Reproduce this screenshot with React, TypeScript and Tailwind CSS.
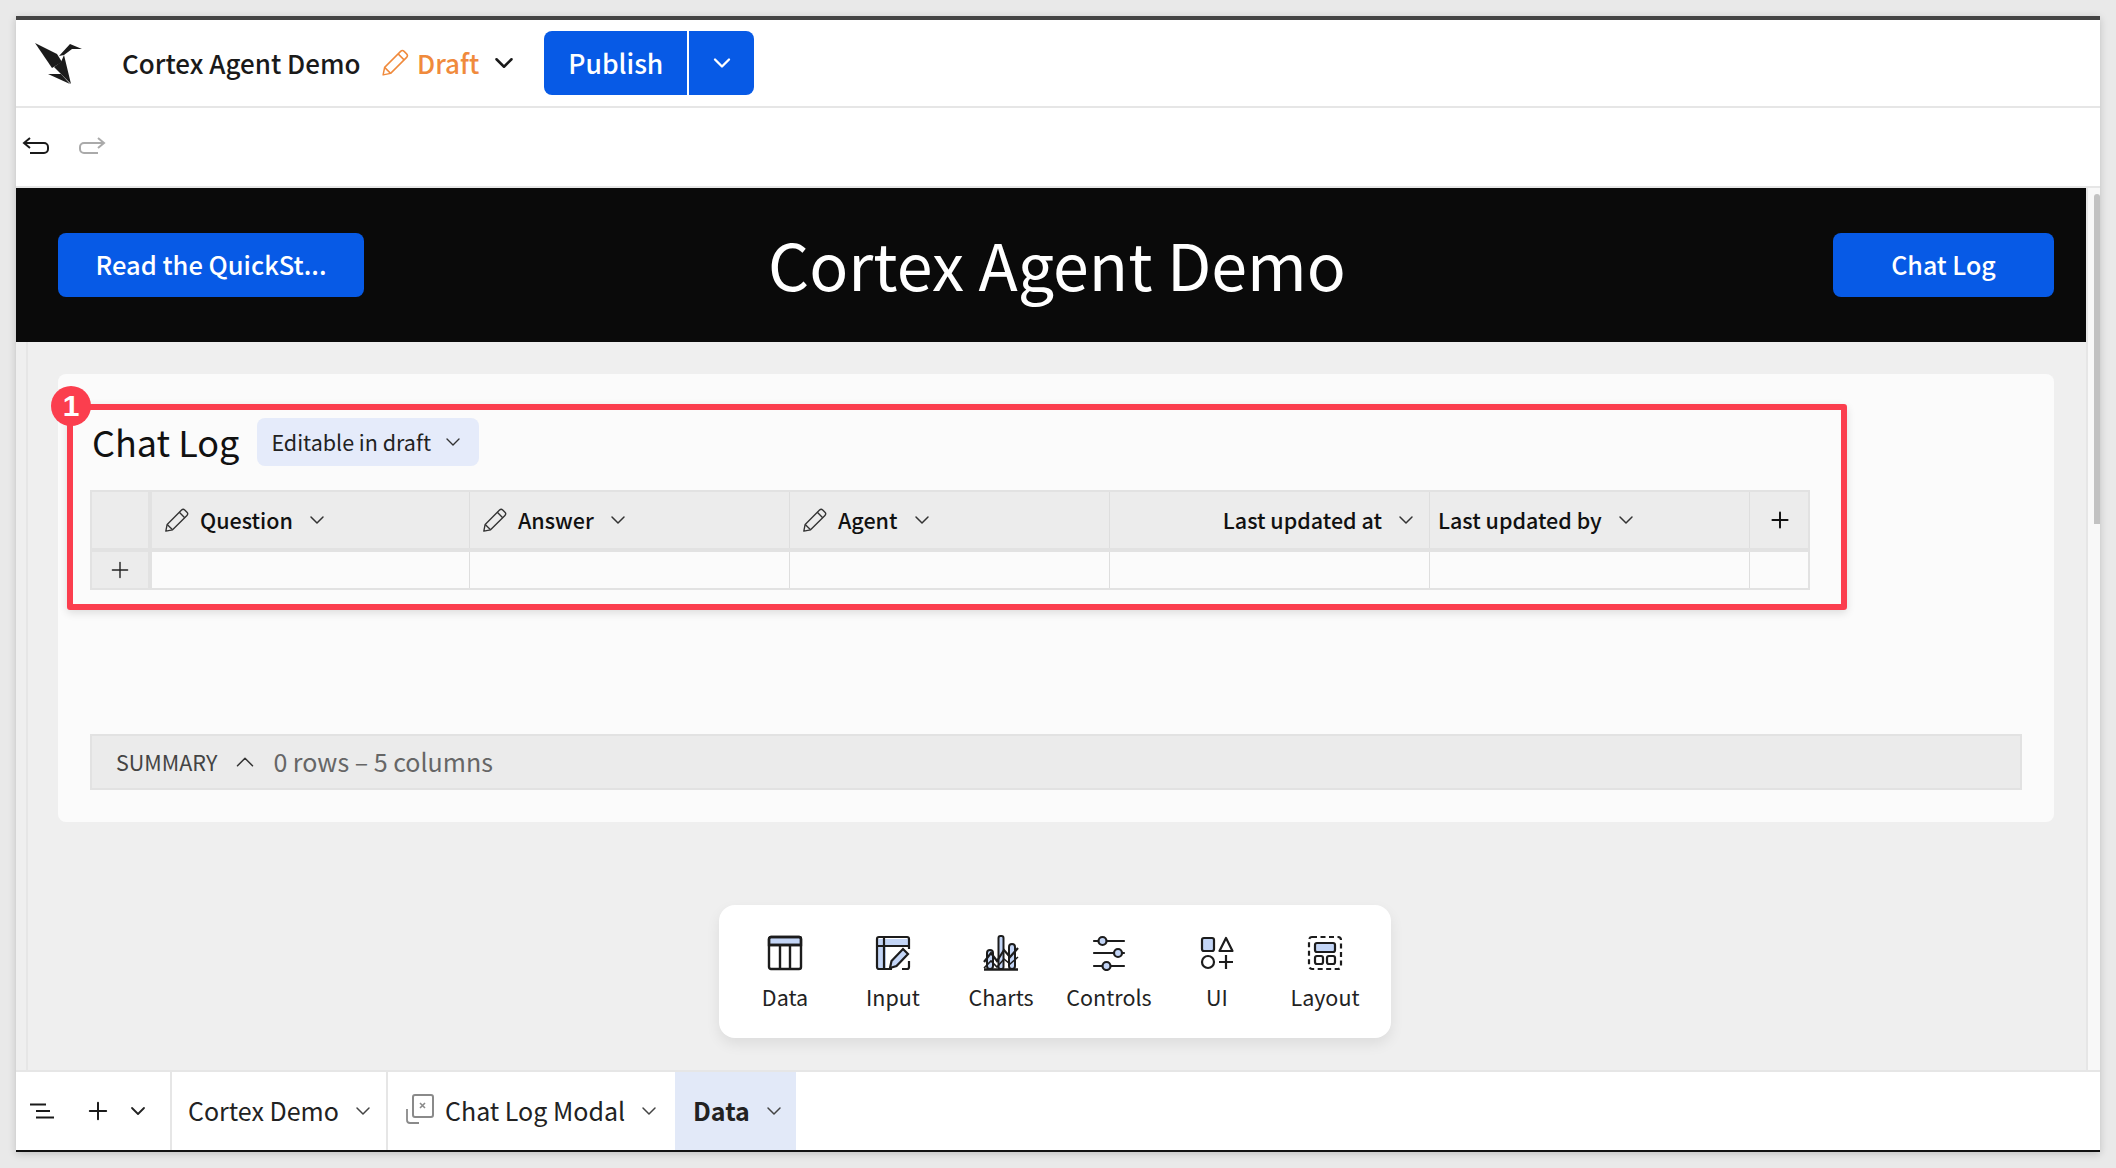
import React from 'react';
import { ChevronDown, ChevronUp, Plus } from 'lucide-react';

const Pencil: React.FC<{ className?: string }> = ({ className }) => (
  <svg viewBox="0 0 24 24" fill="none" stroke="currentColor" strokeWidth="1.2" strokeLinejoin="round" className={className}>
    <path d="M2.500 21.500l1.200-6L16.500 2.700a2 2 0 0 1 2.800 0l2 2a2 2 0 0 1 0 2.800L8.500 20.300z" />
    <path d="M14.500 4.700l4.800 4.800" />
    <path d="M3.700 15.500l4.800 4.800" />
  </svg>
);

const Logo = () => (
  <svg viewBox="0 0 47 41" className="w-[47px] h-[41px]" fill="#1b1b1b">
    <polygon points="0,0 22,11 27,19 17,25" />
    <polygon points="24,13 35,1 47,6 37,6 29,12" />
    <polygon points="26,19 29,12 36,41 19,24" />
    <polygon points="13,31 26,31 35,41" />
  </svg>
);

const DataIcon = () => (
  <svg viewBox="0 0 36 36" className="w-9 h-9" fill="none" stroke="#1c1c1c" strokeWidth="2.4">
    <path d="M2 10V4a2 2 0 0 1 2-2h28a2 2 0 0 1 2 2v6z" fill="#c3d5f6" />
    <rect x="2" y="2" width="32" height="32" rx="2" />
    <path d="M2 10h32M13 10v24M23 10v24" />
  </svg>
);

const InputIcon = () => (
  <svg viewBox="0 0 36 36" className="w-9 h-9" fill="none" stroke="#1c1c1c" strokeWidth="2.2">
    <path d="M2 4h32v7H11v23H4a2 2 0 0 1-2-2z" fill="#c3d5f6" stroke="none" />
    <path d="M17 34H4a2 2 0 0 1-2-2V4a2 2 0 0 1 2-2h28a2 2 0 0 1 2 2v10" />
    <path d="M2 11h32M9 2v32" />
    <path d="M15 33l1.500-7L28 14l5 5-11.500 12z" fill="#c3d5f6" />
    <path d="M34 26v6a2 2 0 0 1-2 2h-5" />
  </svg>
);

const ChartsIcon = () => (
  <svg viewBox="0 0 36 36" className="w-9 h-9" fill="none" stroke="#1c1c1c" strokeWidth="2">
    <path d="M1 34.500h34" strokeWidth="2.400" />
    <rect x="15.500" y="1" width="5" height="33" rx="2" fill="#c3d5f6" />
    <rect x="26" y="9" width="6" height="25" rx="3" fill="#c3d5f6" />
    <rect x="4" y="15" width="6" height="19" rx="3" fill="#c3d5f6" />
    <path d="M1 27l7-9 6 8 7-11 6 7 8-9" strokeWidth="2.200" />
    <path d="M1 33l7-7 6 6 7-8 6 5 8-7" strokeWidth="1.600" />
  </svg>
);

const ControlsIcon = () => (
  <svg viewBox="0 0 36 36" className="w-9 h-9" fill="none" stroke="#1c1c1c" strokeWidth="2.200" strokeLinecap="round">
    <path d="M3 6h4M16 6h17M3 18h19M32 18h1M3 31h8M20 31h13" />
    <circle cx="11.500" cy="6" r="4" fill="#c3d5f6" />
    <circle cx="27" cy="18" r="4" fill="#c3d5f6" />
    <circle cx="15.500" cy="31" r="4" fill="#c3d5f6" />
  </svg>
);

const UiIcon = () => (
  <svg viewBox="0 0 36 36" className="w-9 h-9" fill="none" stroke="#1c1c1c" strokeWidth="2.200">
    <rect x="3" y="3" width="12" height="13" rx="2" fill="#c3d5f6" />
    <path d="M27 3l6.500 13h-13z" strokeLinejoin="round" />
    <circle cx="9" cy="27" r="6" />
    <path d="M27 20v14M20 27h14" />
  </svg>
);

const LayoutIcon = () => (
  <svg viewBox="0 0 36 36" className="w-9 h-9" fill="none" stroke="#1c1c1c" strokeWidth="2.200">
    <rect x="2" y="2" width="32" height="32" rx="3" strokeDasharray="5 3.500" />
    <rect x="8" y="8" width="20" height="9" rx="2" fill="#c3d5f6" />
    <rect x="8" y="21" width="8" height="8" rx="2" />
    <rect x="20" y="21" width="8" height="8" rx="2" />
  </svg>
);

const tools = [
  { label: 'Data', icon: <DataIcon /> },
  { label: 'Input', icon: <InputIcon /> },
  { label: 'Charts', icon: <ChartsIcon /> },
  { label: 'Controls', icon: <ControlsIcon /> },
  { label: 'UI', icon: <UiIcon /> },
  { label: 'Layout', icon: <LayoutIcon /> },
];

const HeaderCell: React.FC<{ name: string; edit?: boolean; right?: boolean }> = ({ name, edit, right }) => (
  <div className={`flex items-center border-r border-[#dedede] bg-[#ececec] ${right ? 'justify-end pr-[11px]' : edit ? 'pl-[11px]' : 'pl-[8px]'}`}>
    {edit && <Pencil className="w-[27px] h-[27px] mr-[10px] text-[#333]" />}
    <span className="text-[21.5px] leading-[30px] font-medium text-[#111]">{name}</span>
    <ChevronDown className="w-[24px] h-[24px] ml-[12px] text-[#333]" strokeWidth={1.5} />
  </div>
);

const App: React.FC = () => {
  return (
    <div className="w-full h-[1168px] bg-[#e9e9e9] pt-4 pl-4 pr-4 overflow-hidden font-['Noto_Sans_CJK_JP','Noto_Sans',sans-serif]">
      <div className="w-[2084px] h-[1136px] flex flex-col bg-white border-t-4 border-[#444] border-b-2 border-b-[#111] shadow-[0_2px_8px_rgba(0,0,0,0.18)]">
        {/* top bar */}
        <div className="h-[88px] shrink-0 flex items-center border-b-2 border-[#e6e6e6] pl-[19px]">
          <Logo />
          <span className="ml-[40px] text-[26px] leading-[36px] font-medium text-[#1a1a1a] w-[239px] whitespace-nowrap">Cortex Agent Demo</span>
          <Pencil className="ml-[19px] w-[30px] h-[30px] text-[#f08a3c]" />
          <span className="ml-[7px] text-[26px] leading-[36px] font-medium text-[#f08a3c]">Draft</span>
          <ChevronDown className="ml-[10px] w-[30px] h-[30px] text-[#1a1a1a]" strokeWidth={2} />
          <div className="ml-[25px] flex h-16 w-[210px] rounded-lg bg-[#075ae6] text-white overflow-hidden">
            <div className="w-[145px] flex items-center justify-center border-r-2 border-white text-[26.500px] font-medium">Publish</div>
            <div className="flex-1 flex items-center justify-center">
              <ChevronDown className="w-[28px] h-[28px]" strokeWidth={2} />
            </div>
          </div>
        </div>

        {/* undo / redo */}
        <div className="h-[80px] shrink-0 flex items-center border-b-2 border-[#e6e6e6] pl-[6px] gap-[28px] pb-[2px]">
          <svg viewBox="0 0 28 18" fill="none" stroke="#1a1a1a" strokeWidth="2" className="w-[28px] h-[18px]">
            <path d="M8 1L2 6l6 5M2 6h20a4 4 0 0 1 4 4v2a4 4 0 0 1-4 4H8" />
          </svg>
          <svg viewBox="0 0 28 18" fill="none" stroke="#aaaaaa" strokeWidth="2" className="w-[28px] h-[18px]">
            <path d="M20 1l6 5-6 5M26 6H6a4 4 0 0 0-4 4v2a4 4 0 0 0 4 4h14" />
          </svg>
        </div>

        {/* page body */}
        <div className="flex-1 flex min-h-0">
          <div className="w-[2070px] flex flex-col">
            <div className="h-[154px] shrink-0 bg-[#0a0a0a] flex items-center pl-[42px]">
              <div className="w-[306px] h-16 rounded-lg bg-[#075ae6] text-white flex items-center justify-center text-[25.500px] font-medium pb-[1px]">Read the QuickSt...</div>
              <div className="w-[1469px] pr-[83px] text-center text-white text-[64.500px] leading-[80px] pb-[5px]">Cortex Agent Demo</div>
              <div className="w-[221px] h-16 rounded-lg bg-[#075ae6] text-white flex items-center justify-center text-[25px] font-medium pb-[1px]">Chat Log</div>
            </div>

            <div className="flex-1 bg-[#efefef] pl-[10px]">
              <div className="h-full border-l-2 border-[#e6e6e6] pl-[30px] pt-8">
                {/* card */}
                <div className="relative w-[1996px] h-[448px] rounded-lg bg-[#fbfbfb] pt-[44px] px-8">
                  <div className="flex items-center h-12">
                    <span className="text-[36px] leading-[48px] text-[#111] ml-[2px] pb-[3px]">Chat Log</span>
                    <div className="ml-[18px] h-12 w-[222px] rounded-lg bg-[#e5ebfa] flex items-center pl-[14px] text-[21.5px] text-[#222]">
                      Editable in draft
                      <ChevronDown className="ml-[10px] w-[24px] h-[24px] text-[#333]" strokeWidth={1.4} />
                    </div>
                  </div>

                  <div className="mt-6 w-[1720px] h-[100px] border-2 border-[#e2e2e2] grid grid-cols-[60px_318px_320px_320px_320px_320px_1fr] grid-rows-[60px_1fr]">
                    <div className="bg-[#ececec] border-r-4 border-b-4 border-[#e2e2e2]" />
                    <div className="col-span-6 grid grid-cols-[318px_320px_320px_320px_320px_1fr] border-b-4 border-[#e2e2e2]">
                      <HeaderCell name="Question" edit />
                      <HeaderCell name="Answer" edit />
                      <HeaderCell name="Agent" edit />
                      <HeaderCell name="Last updated at" right />
                      <HeaderCell name="Last updated by" />
                      <div className="flex items-center justify-center bg-[#ececec] pl-[2px]">
                        <Plus className="w-[26px] h-[26px] text-[#111]" strokeWidth={1.8} />
                      </div>
                    </div>
                    <div className="bg-[#ececec] border-r-4 border-[#e2e2e2] flex items-center justify-center">
                      <Plus className="w-[26px] h-[26px] text-[#222]" strokeWidth={1.3} />
                    </div>
                    <div className="border-r border-[#dedede]" />
                    <div className="border-r border-[#dedede]" />
                    <div className="border-r border-[#dedede]" />
                    <div className="border-r border-[#dedede]" />
                    <div className="border-r border-[#dedede]" />
                    <div />
                  </div>

                  <div className="mt-[144px] h-14 border-2 border-[#e2e2e2] bg-[#ebebeb] flex items-center pl-[24px]">
                    <span className="text-[21.500px] text-[#444]">SUMMARY</span>
                    <ChevronUp className="ml-[13px] w-[30px] h-[30px] text-[#333]" strokeWidth={1.2} />
                    <span className="ml-[13px] text-[25px] text-[#666]">0 rows – 5 columns</span>
                  </div>

                  {/* annotation */}
                  <div className="absolute left-[9px] top-[30px] w-[1780px] h-[206px] border-[6px] border-[#fb3e4e] rounded-[3px] shadow-[0_3px_8px_rgba(0,0,0,0.12)]" />
                  <div className="absolute left-[-7px] top-[12px] w-10 h-10 rounded-full bg-[#fb3e4e] text-white text-[30px] font-bold leading-[40px] text-center font-['Liberation_Sans',sans-serif]">1</div>
                </div>

                {/* element toolbox */}
                <div className="mt-[83px] ml-[661px] w-[672px] h-[133px] rounded-2xl bg-white shadow-[0_6px_14px_rgba(0,0,0,0.08)] px-[12px] pt-[30px] grid grid-cols-6">
                  {tools.map(t => (
                    <div key={t.label} className="flex flex-col items-center">
                      {t.icon}
                      <span className="mt-[10px] text-[21.500px] leading-[32px] text-[#222]">{t.label}</span>
                    </div>
                  ))}
                </div>
              </div>
            </div>
          </div>

          {/* scrollbar */}
          <div className="flex-1 bg-[#f8f8f8] border-l-2 border-[#e6e6e6] pl-[6px] pt-[6px]">
            <div className="h-[330px] rounded-t-lg bg-[#c2c2c2]" />
          </div>
        </div>

        {/* sheet tabs */}
        <div className="h-[80px] shrink-0 border-t-2 border-[#e6e6e6] flex">
          <div className="w-[156px] flex items-center border-r-2 border-[#e6e6e6] pl-[14px]">
            <svg viewBox="0 0 24 16" fill="none" stroke="#1a1a1a" strokeWidth="2.200" className="w-[24px] h-[16px]">
              <path d="M0 1.500h16M6 8h14M6 14.500h18" />
            </svg>
            <Plus className="ml-[30px] w-[28px] h-[28px] text-[#1a1a1a]" strokeWidth={1.7} />
            <ChevronDown className="ml-[14px] w-[24px] h-[24px] text-[#222]" strokeWidth={1.8} />
          </div>
          <div className="w-[216px] flex items-center border-r-2 border-[#e6e6e6] pl-[16px] text-[25px] text-[#222]">
            Cortex Demo
            <ChevronDown className="ml-[12px] w-[24px] h-[24px] text-[#444]" strokeWidth={1.5} />
          </div>
          <div className="w-[287px] flex items-center pl-[18px] text-[25px] text-[#222]">
            <svg viewBox="0 0 28 30" fill="none" stroke="#8a8a8a" strokeWidth="2" className="w-[28px] h-[30px] mr-[11px] mb-[4px]">
              <rect x="7" y="1" width="20" height="22" rx="2" />
              <path d="M14 9l5 5M19 9l-5 5" strokeWidth="1.600" />
              <path d="M1 15v11a3 3 0 0 0 3 3h9" strokeWidth="1.800" />
            </svg>
            Chat Log Modal
            <ChevronDown className="ml-[12px] w-[24px] h-[24px] text-[#444]" strokeWidth={1.5} />
          </div>
          <div className="w-[121px] bg-[#e2e9f8] flex items-center pl-[18px] text-[25px] font-bold text-[#222]">
            Data
            <ChevronDown className="ml-[12px] w-[24px] h-[24px] text-[#444]" strokeWidth={1.5} />
          </div>
        </div>
      </div>
    </div>
  );
};

export default App;
